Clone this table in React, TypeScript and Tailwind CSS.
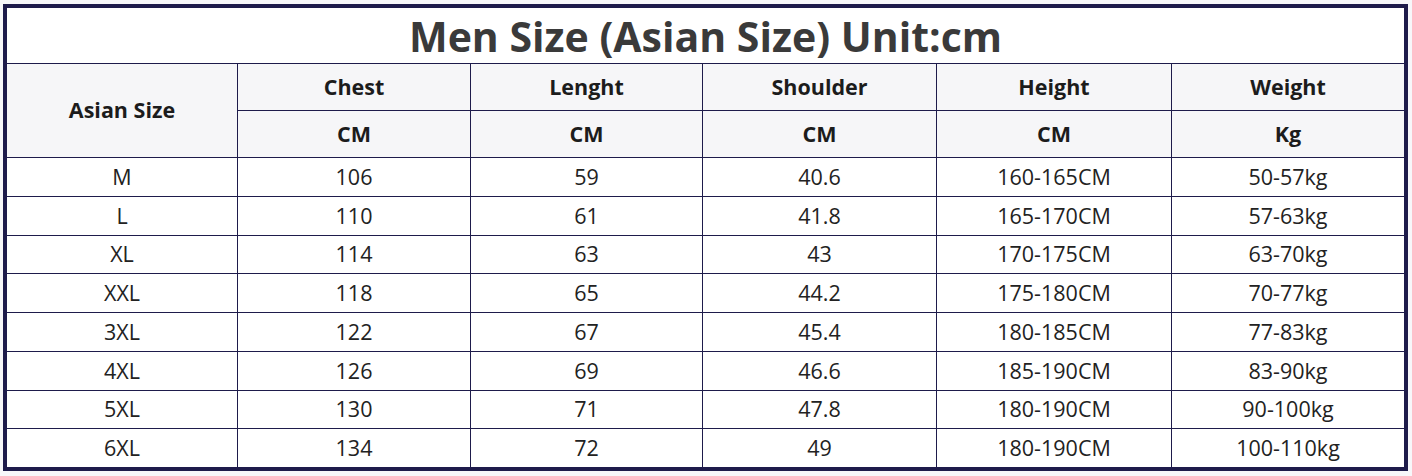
import React from 'react'

const rows = [
  ['M', '106', '59', '40.6', '160-165CM', '50-57kg'],
  ['L', '110', '61', '41.8', '165-170CM', '57-63kg'],
  ['XL', '114', '63', '43', '170-175CM', '63-70kg'],
  ['XXL', '118', '65', '44.2', '175-180CM', '70-77kg'],
  ['3XL', '122', '67', '45.4', '180-185CM', '77-83kg'],
  ['4XL', '126', '69', '46.6', '185-190CM', '83-90kg'],
  ['5XL', '130', '71', '47.8', '180-190CM', '90-100kg'],
  ['6XL', '134', '72', '49', '180-190CM', '100-110kg'],
]

const heads = [
  ['Chest', 'CM'],
  ['Lenght', 'CM'],
  ['Shoulder', 'CM'],
  ['Height', 'CM'],
  ['Weight', 'Kg'],
]

const cols = 'grid grid-cols-[230px_233px_232px_234px_235px_1fr]'

function App() {
  return (
    <div className="w-[1412px] h-[476px] bg-[#f7f7fa] pt-[4px] pl-[3px]" style={{ fontFamily: '"Open Sans", "Liberation Sans", sans-serif' }}>
      <div className="w-[1405px] h-[467px] border-4 border-[#1e1b4b] bg-white flex flex-col">
        <div className="h-[56px] shrink-0 flex items-center justify-center border-b border-[#1e1b4b] text-[41px] font-bold text-[#3a3a3a] leading-none pt-[2px]">
          Men Size (Asian Size) Unit:cm
        </div>
        <div className={`${cols} grid-rows-[47px_47px] shrink-0 bg-[#f6f6f8] text-[21.5px] font-bold text-[#1c1c1c]`}>
          <div className="row-span-2 flex items-center justify-center border-b border-[#1e1b4b]">Asian Size</div>
          {heads.map((h) => (
            <div key={h[0]} className="flex items-center justify-center border-l border-b border-[#1e1b4b]">{h[0]}</div>
          ))}
          {heads.map((h, i) => (
            <div key={i} className="flex items-center justify-center border-l border-b border-[#1e1b4b]">{h[1]}</div>
          ))}
        </div>
        <div className="flex-1 flex flex-col text-[21.5px] text-[#222]">
          {rows.map((r, i) => (
            <div key={r[0]} className={`flex-1 ${cols} ${i < rows.length - 1 ? 'border-b border-[#1e1b4b]' : ''}`}>
              {r.map((c, j) => (
                <div key={j} className={`flex items-center justify-center ${j > 0 ? 'border-l border-[#1e1b4b]' : ''}`}>{c}</div>
              ))}
            </div>
          ))}
        </div>
      </div>
    </div>
  )
}

export default App
